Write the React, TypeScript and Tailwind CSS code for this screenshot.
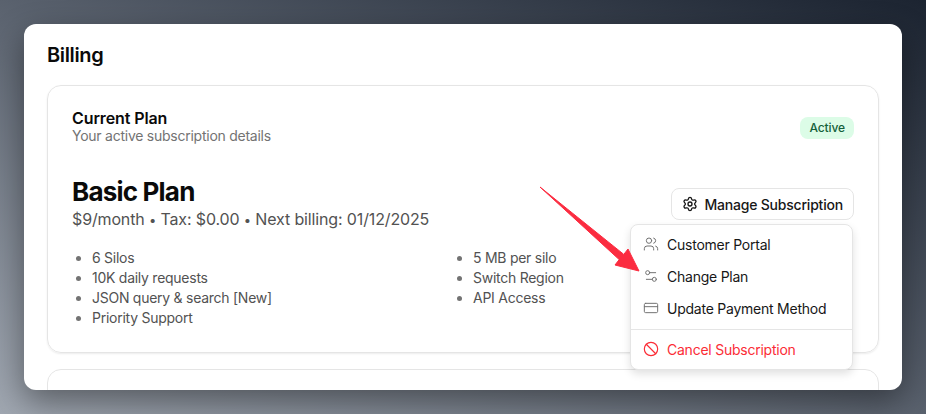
import { Settings, Users, Settings2, CreditCard, Ban } from "lucide-react";

const left = ["6 Silos", "10K daily requests", "JSON query & search [New]", "Priority Support"];
const right = ["5 MB per silo", "Switch Region", "API Access"];

function Bullets({ items }: { items: string[] }) {
  return (
    <ul className="list-disc pl-[20px] text-[14px] leading-[20px] tracking-[-0.26px] text-[#525252] marker:text-[#737373]">
      {items.map((t) => (
        <li key={t}>{t}</li>
      ))}
    </ul>
  );
}

function Item({ icon, label, red }: { icon: React.ReactNode; label: string; red?: boolean }) {
  return (
    <div className={`flex h-[32px] items-center gap-[8px] px-[12px] text-[14px] tracking-[-0.24px] ${red ? "text-[#fb2c36]" : "text-[#171717]"}`}>
      {icon}
      <span>{label}</span>
    </div>
  );
}

export default function App() {
  return (
    <div className="h-[414px] w-[926px] overflow-hidden bg-linear-to-bl from-[#1c2431] to-[#a0a7b1] p-[24px] font-['Inter',sans-serif]">
      <div className="relative h-[366px] w-[878px] overflow-hidden rounded-[12px] bg-white px-[23px] pt-[18px] shadow-[0_12px_32px_rgba(0,0,0,0.4)]">
        <h1 className="text-[20px] leading-[26px] font-semibold tracking-[-0.35px] text-[#0a0a0a]">Billing</h1>
        <div className="mt-[17px] flex h-[268px] flex-col rounded-[14px] border border-[#e5e5e5] px-[24px] pt-[22px] shadow-[0_1px_2px_rgba(0,0,0,0.08)]">
          <div className="flex items-center justify-between">
            <div>
              <div className="text-[16px] leading-[20px] font-semibold tracking-[-0.1px] text-[#0a0a0a]">Current Plan</div>
              <div className="text-[14px] leading-[16px] tracking-[-0.25px] text-[#737373]">Your active subscription details</div>
            </div>
            <span className="mt-[4px] rounded-[8px] bg-[#dcfce7] px-[9px] py-[2px] text-[12px] leading-[18px] font-medium tracking-[-0.1px] text-[#14603a]">
              Active
            </span>
          </div>
          <div className="mt-[33px] flex items-start justify-between">
            <div>
              <div className="text-[26px] leading-[30px] font-bold tracking-[-0.8px] text-[#0a0a0a]">Basic Plan</div>
              <div className="text-[16px] leading-[24px] tracking-[-0.14px] text-[#525252]">
                $9/month <span className="text-[13px]">•</span> Tax: $0.00 <span className="text-[13px]">•</span> Next billing: 01/12/2025
              </div>
            </div>
            <button className="mt-[11px] flex h-[32px] items-center gap-[6px] rounded-[8px] border border-[#e5e5e5] bg-white px-[10px] text-[14px] font-medium tracking-[-0.2px] text-[#171717]">
              <Settings size={16} strokeWidth={2} />
              Manage Subscription
            </button>
          </div>
          <div className="mt-[16px] grid grid-cols-[381px_1fr]">
            <Bullets items={left} />
            <Bullets items={right} />
          </div>
        </div>
        <div className="mt-[16px] h-[40px] rounded-[14px] border border-[#e5e5e5]" />

        <div className="absolute top-[200px] left-[606px] w-[223px] rounded-[8px] border border-[#e5e5e5] bg-white pt-[3px] pb-[4px] shadow-[0_4px_8px_rgba(0,0,0,0.12)]">
          <Item icon={<Users size={16} strokeWidth={1.5} className="text-[#737373]" />} label="Customer Portal" />
          <Item icon={<Settings2 size={16} strokeWidth={1.5} className="text-[#737373]" />} label="Change Plan" />
          <Item icon={<CreditCard size={16} strokeWidth={1.5} className="text-[#737373]" />} label="Update Payment Method" />
          <div className="mt-[5px] mb-[3px] h-px bg-[#e5e5e5]" />
          <Item red icon={<Ban size={16} strokeWidth={1.75} />} label="Cancel Subscription" />
        </div>

        <svg className="absolute top-[160px] left-[512px]" width="110" height="95" viewBox="0 0 110 95">
          <path d="M4 3 L87.8 70.4 L92 65 L103 87 L79 81 L83.2 75.6 Z" fill="#fb2c40" stroke="#fb2c40" strokeLinejoin="round" />
        </svg>
      </div>
    </div>
  );
}
